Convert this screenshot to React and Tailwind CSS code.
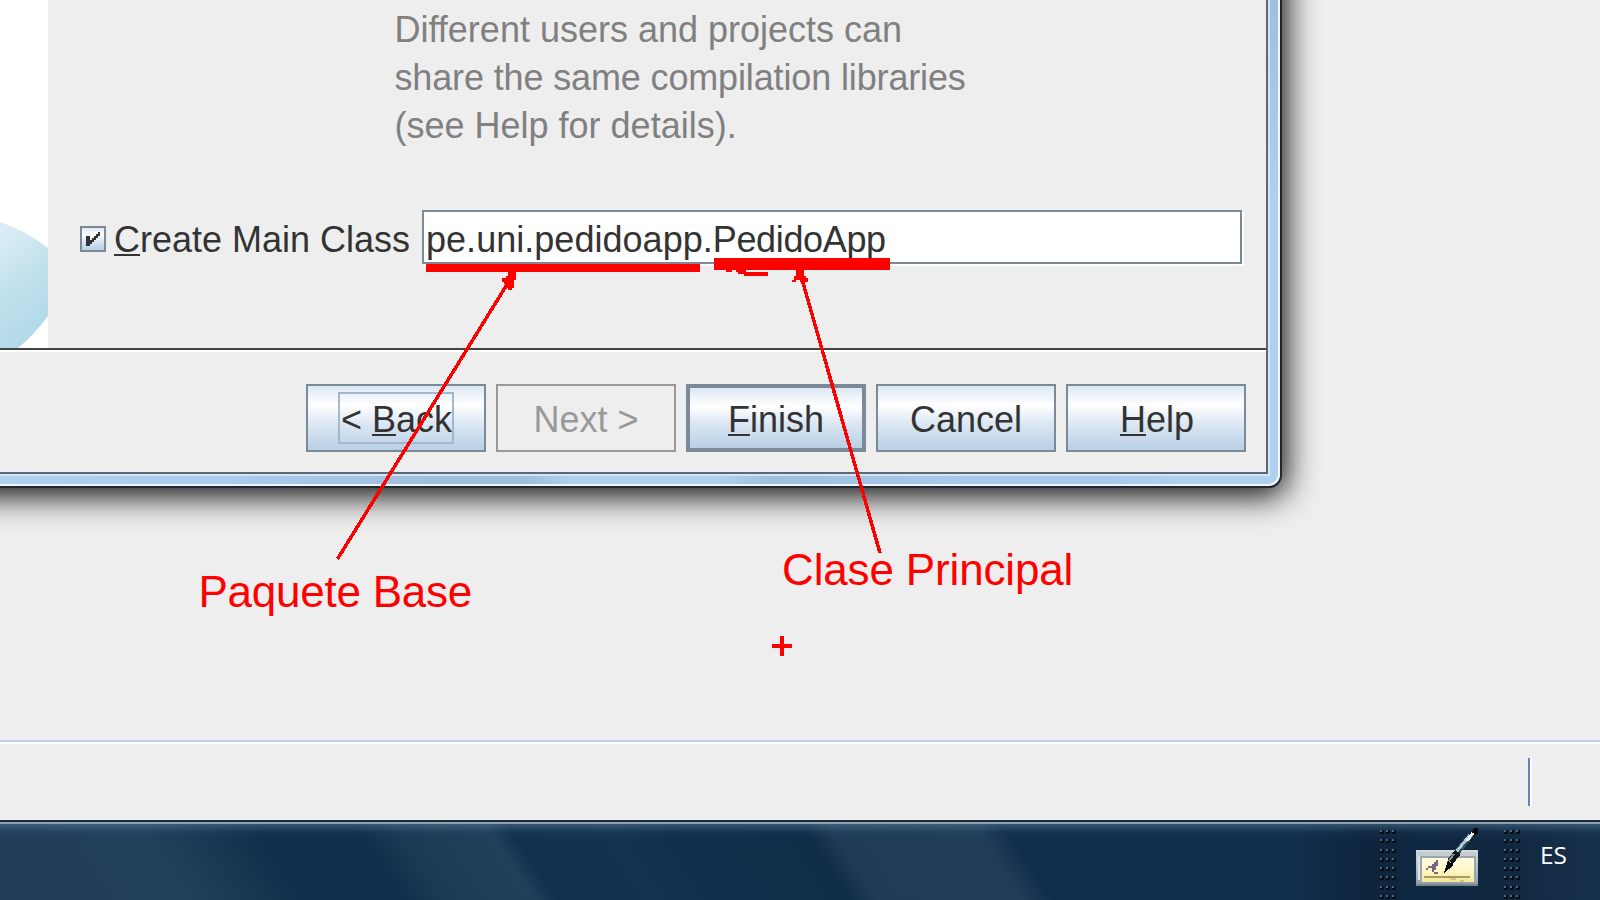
const F = "font-['Liberation_Sans',Arial,sans-serif]";
const metal = "bg-[linear-gradient(180deg,#dde8f3_0%,#ffffff_30%,#dde8f3_58%,#b8cfe5_100%)]";
const button = "flex h-[68px] w-[180px] items-center justify-center whitespace-pre";

function Mnemonic({ children }) {
  return (
    <u className="underline decoration-2 underline-offset-[2px] [text-decoration-skip-ink:none]">{children}</u>
  );
}

function Grip() {
  return (
    <div className="mt-[6px] grid w-4 shrink-0 grid-cols-3 gap-x-0.5 gap-y-1">
      {Array.from({ length: 24 }, (_, i) => (
        <i key={i} className="block size-1 bg-[#050f1a]">
          <i className="block size-0.5 bg-[#52677b]" />
        </i>
      ))}
    </div>
  );
}

function TabletIcon() {
  return (
    <svg className="mt-[4px] ml-[20px] shrink-0" width="64" height="60" viewBox="0 0 64 60" shapeRendering="crispEdges">
      <defs>
        <linearGradient id="frame" x1="0" y1="0" x2="0" y2="1">
          <stop offset="0" stopColor="#d5dadd" />
          <stop offset=".5" stopColor="#b4c0c6" />
          <stop offset="1" stopColor="#8d9ba3" />
        </linearGradient>
        <linearGradient id="paper" x1="0" y1="0" x2="0" y2="1">
          <stop offset="0" stopColor="#fffbe0" />
          <stop offset=".5" stopColor="#fff8c8" />
          <stop offset="1" stopColor="#f3e59a" />
        </linearGradient>
      </defs>
      <path d="M0 22H62V58H0Z" fill="url(#frame)" />
      <path d="M2 24H60V28H2Z" fill="#c3ccd1" />
      <path d="M2 28H4V52H2Z" fill="#dde2e5" />
      <path d="M0 56H62V58H0Z" fill="#77868e" />
      <path d="M4 28H60V54H4Z" fill="#9aa8ae" />
      <path d="M6 30H58V54H6Z" fill="url(#paper)" />
      <path d="M32 50h8v2h8v2H44v-2h-8z" fill="#cfc48a" />
      <path d="M8 48H54V50H8Z" fill="#a99b62" />
      <path d="M20 32h2v6h-2v4h-2v2h4v2h-4v-2h-2v-4h-4v2h-2v-2h2v-2h4v-2h2v-2h2z" fill="#7f6480" />
      <path d="M60 2L46 20" stroke="#0b1319" strokeWidth="5" />
      <path d="M55 7L38 28" stroke="#34505f" strokeWidth="6" />
      <path d="M54 7L38 27" stroke="#a9cad8" strokeWidth="3" />
      <path d="M57 5L51 13" stroke="#edf5f8" strokeWidth="3" />
      <path d="M42 24L34 34" stroke="#121619" strokeWidth="7" />
      <path d="M38 26L32 34" stroke="#87949a" strokeWidth="2" />
      <path d="M32 33L28 45L38 37Z" fill="#08090a" />
      <path d="M58 0H62V6H58Z" fill="#05080b" />
    </svg>
  );
}

export default function App() {
  return (
    <div className={`relative flex h-[900px] w-[1600px] flex-col overflow-hidden bg-[#eeeeee] text-[36px] leading-[48px] text-[#333333] ${F}`}>
      <main className="h-[740px] w-full shrink-0">
        <section className="-mt-20 -ml-20 h-[568px] w-[1362px] rounded-br-[13px] border-r-2 border-b-2 border-[#1f2933] bg-[#f0f6fb] pt-20 pl-20 shadow-[0_4px_32px_4px_rgba(0,0,0,.95)]">
          <div className="h-[484px] w-[1278px] rounded-br-[10px] bg-[linear-gradient(180deg,#a0bfdf_0,#b0d0f0_200px,transparent_200px),linear-gradient(90deg,#b0d0f0_0,#aacbee_240px,#a0bfdf_430px,#a0bfdf_530px,#b0d0f0_570px,#b0d0f0_720px,#a0bfdf_770px,#a8c9ec_960px,#a8c9ec_1100px,#b0d0f0_1180px)]">
            <div className="h-[476px] w-[1270px] border-r-2 border-b-2 border-[#d5e4f4]">
              <div className="flex h-[474px] w-[1268px] flex-col border-r-2 border-b-2 border-[#5a6878] bg-[#eeeeee]">
                <div className="flex h-[348px] shrink-0">
                  <svg className="h-[348px] w-12 shrink-0 bg-white" viewBox="0 0 48 348">
                    <defs>
                      <linearGradient id="swoosh" gradientUnits="userSpaceOnUse" x1="0" y1="240" x2="60" y2="320">
                        <stop offset="0" stopColor="#d9ecf5" />
                        <stop offset=".5" stopColor="#bfe0eb" />
                        <stop offset="1" stopColor="#b0d9ea" />
                      </linearGradient>
                    </defs>
                    <path d="M0 222Q27 231 48 248V316Q34 335 18 348H0Z" fill="url(#swoosh)" />
                  </svg>
                  <div className="flex flex-col pl-8">
                    <div className="h-[210px] pt-1.5 pl-[314.5px] whitespace-pre text-[#808080]">
                      <p>Different users and projects can</p>
                      <p className="tracking-[-0.14px]">share the same compilation libraries</p>
                      <p>(see Help for details).</p>
                    </div>
                    <div className="flex">
                      <div className={`mt-4 flex size-[26px] items-center justify-center border-2 border-[#7a8a99] ${metal}`}>
                        <svg className="shrink-0" width="22" height="22" viewBox="0 0 22 22" shapeRendering="crispEdges">
                          <path d="M16 4h2v4h-2v2h-2v2h-2v2h-2v2H8v2H4V8h4v4h2v-2h2V8h2V6h2z" fill="#333" />
                        </svg>
                      </div>
                      <div className="mt-[17px] ml-2 h-[30px] w-[308px] leading-[26px] tracking-[-0.01px] whitespace-nowrap">
                        <Mnemonic>C</Mnemonic>reate Main Class
                      </div>
                      <div className="h-[54px] w-[820px] border-2 border-[#7a8a99] bg-white pt-[3px] pl-0.5 leading-[50px] whitespace-nowrap shadow-[2px_2px_0_white]">
                        <span className="tracking-[0.03px]">pe.uni.pedidoapp.</span>
                        <span className="tracking-[-0.35px]">PedidoApp</span>
                      </div>
                    </div>
                  </div>
                </div>
                <div className="h-1 shrink-0 border-t-2 border-b-2 border-t-[#444] border-b-white" />
                <div className="flex gap-2.5 pt-8 pl-[306px]">
                  <button className={`${button} border-2 border-[#7a8a99] ${metal}`}>
                    <span className="flex h-[52px] w-[116px] items-center justify-center border-2 border-[#a3b8cc] pt-1 pl-px">
                      <span>&lt; <Mnemonic>B</Mnemonic>ack</span>
                    </span>
                  </button>
                  <button className={`${button} border-2 border-[#999] pt-1 text-[#999]`}>Next &gt;</button>
                  <button className={`${button} border-4 border-[#7a8a99] pt-1 ${metal}`}>
                    <span><Mnemonic>F</Mnemonic>inish</span>
                  </button>
                  <button className={`${button} border-2 border-[#7a8a99] pt-1 ${metal}`}>Cancel</button>
                  <button className={`${button} border-2 border-[#7a8a99] pt-1 pl-0.5 ${metal}`}>
                    <span><Mnemonic>H</Mnemonic>elp</span>
                  </button>
                </div>
              </div>
            </div>
          </div>
        </section>
      </main>

      <div className="flex h-20 shrink-0 justify-end border-t-2 border-[#b8cfe5] pr-[68px] shadow-[inset_0_2px_0_white]">
        <div className="mt-4 h-12 w-1 border-r-2 border-l-2 border-r-white border-l-[#6382bf]" />
      </div>

      <footer className="flex h-20 shrink-0 flex-col border-t-2 border-[#1d2b38] bg-[linear-gradient(56.7deg,#213b58_0%,#213f5b_11.5%,#1c3955_14%,#102d4b_19%,#102d4b_24.2%,#1c3955_27%,#213e5a_32.4%,#11304d_33.8%,#143350_40%,#102d4b_44%,#0f2c48_51.5%,#1f3b57_53.2%,#203c58_62%,#102d4b_63.8%,#102d4b_100%)]">
        <div className="h-0.5 shrink-0 bg-[#8fa1b1]" />
        <div className="flex grow bg-[linear-gradient(180deg,rgba(90,135,165,.45)_0,rgba(60,100,130,.12)_8px,transparent_16px),linear-gradient(90deg,transparent_1300px,#0d243c_1370px,#0e2741_1420px,#10273f_1500px,#17304a_1600px)] pl-[1380px]">
          <Grip />
          <TabletIcon />
          <div className="w-6 shrink-0" />
          <Grip />
          <span className="mt-[13px] ml-[20px] font-['Open_Sans','Noto_Sans',sans-serif] text-[24.5px] leading-[36px] text-white">ES</span>
        </div>
      </footer>

      <span className="absolute top-[568px] left-[198.5px] text-[44px] tracking-[-0.25px] whitespace-nowrap text-[#ff0000]">Paquete Base</span>
      <span className="absolute top-[546px] left-[782px] text-[44px] tracking-[-0.15px] whitespace-nowrap text-[#ff0000]">Clase Principal</span>
      <svg className="pointer-events-none absolute inset-0" width="1600" height="900" viewBox="0 0 1600 900" shapeRendering="crispEdges" fill="#ff0000">
        <path d="M426 264H700V272H426Z" />
        <path d="M714 258H890V270H714Z" />
        <path d="M726 270h6v2h-6zM736 270h10v2h22v4h-24v-2h-6v-2h-2z" />
        <path d="M337.5 559L511 278M800 272L880 553" fill="none" stroke="#ff0000" strokeWidth="3.5" />
        <path d="M508 272h8v8h-2v8h-2v2h-4v-2h-2v-4h-2v-2h-2v-4h4v-2h2z" />
        <path d="M796 270h8v6h2v2h2v4h-8v-2h-4v2h-4v-2h2v-4h2z" />
        <path d="M780 636h4v8h8v4h-8v8h-4v-8h-8v-4h8z" />
      </svg>
    </div>
  );
}
